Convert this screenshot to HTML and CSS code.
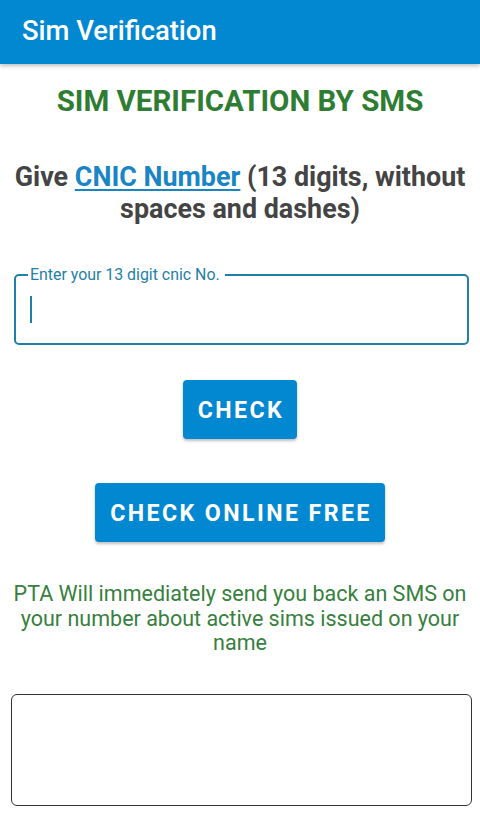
FILE: index.html
```html
<!DOCTYPE html>
<html>
<head>
<meta charset="utf-8">
<link rel="stylesheet" href="styles.css">
</head>
<body>
<header class="appbar"><span class="appbar-title">Sim Verification</span></header>
<main class="content">
  <h1 class="heading">SIM VERIFICATION BY SMS</h1>
  <p class="give">Give <a class="link" href="#">CNIC Number</a> (13 digits, without spaces and dashes)</p>
  <fieldset class="field">
    <legend class="field-label">Enter your 13 digit cnic No.</legend>
    <span class="cursor"></span>
  </fieldset>
  <div class="btn-row btn-row-first"><button class="btn">CHECK</button></div>
  <div class="btn-row btn-row-second"><button class="btn">CHECK ONLINE FREE</button></div>
  <p class="info">PTA Will immediately send you back an SMS on your number about active sims issued on your name</p>
  <div class="result-box"></div>
</main>
</body>
</html>
```
FILE: styles.css
```css
* { box-sizing: border-box; }
html, body { margin: 0; padding: 0; background: #fff; }
body {
  font-family: Roboto, "Liberation Sans", sans-serif;
  width: 480px;
  height: 817px;
  overflow: hidden;
}
.appbar {
  height: 64px;
  background: #0288d1;
  display: flex;
  align-items: center;
  padding-left: 22px;
  box-shadow: 0 2px 4px rgba(0,0,0,0.25);
  position: relative;
  z-index: 1;
}
.appbar-title {
  color: #fff;
  font-size: 27.4px;
  font-weight: 500;
  margin-top: -3px;
}
.content {
  display: flex;
  flex-direction: column;
  align-items: stretch;
}
.heading {
  margin: 19px 0 0;
  text-align: center;
  color: #2e7d32;
  font-size: 29.5px;
  font-weight: 700;
  line-height: 36px;
}
.give {
  margin: 42px 0 0;
  text-align: center;
  color: #444;
  font-size: 26.9px;
  font-weight: 700;
  line-height: 32px;
  padding: 0 6px;
}
.link {
  color: #1a85c5;
  text-decoration: underline;
  text-decoration-thickness: 2px;
  text-underline-offset: 3px;
}
.field {
  margin: 42px 11px 0 14px;
  height: 78px;
  border: 2px solid #1f7fa6;
  border-radius: 5px;
  padding: 0 0 0 14px;
  position: relative;
}
.field-label {
  color: #1f7fa6;
  font-size: 15.9px;
  padding: 0 5px 0 2px;
  margin-left: -2px;
  line-height: 16px;
}
.cursor {
  display: block;
  width: 2px;
  height: 27px;
  background: #1f7fa6;
  margin-top: 13px;
}
.btn-row {
  display: flex;
  justify-content: center;
}
.btn-row-first { margin-top: 35px; }
.btn-row-second { margin-top: 44px; }
.btn {
  background: #0288d1;
  color: #fff;
  border: none;
  border-radius: 4px;
  font-family: Roboto, "Liberation Sans", sans-serif;
  font-weight: 700;
  font-size: 23.2px;
  letter-spacing: 2.4px;
  height: 59px;
  padding: 0 13px 0 15px;
  box-shadow: 0 2px 3px rgba(0,0,0,0.25);
}
.info {
  margin: 40px 0 0;
  text-align: center;
  color: #37803e;
  font-size: 21.5px;
  line-height: 24.5px;
  padding: 0 6px;
}
.result-box {
  margin: 38px 8px 0 11px;
  height: 112px;
  border: 1.5px solid #333;
  border-radius: 6px;
}
```
